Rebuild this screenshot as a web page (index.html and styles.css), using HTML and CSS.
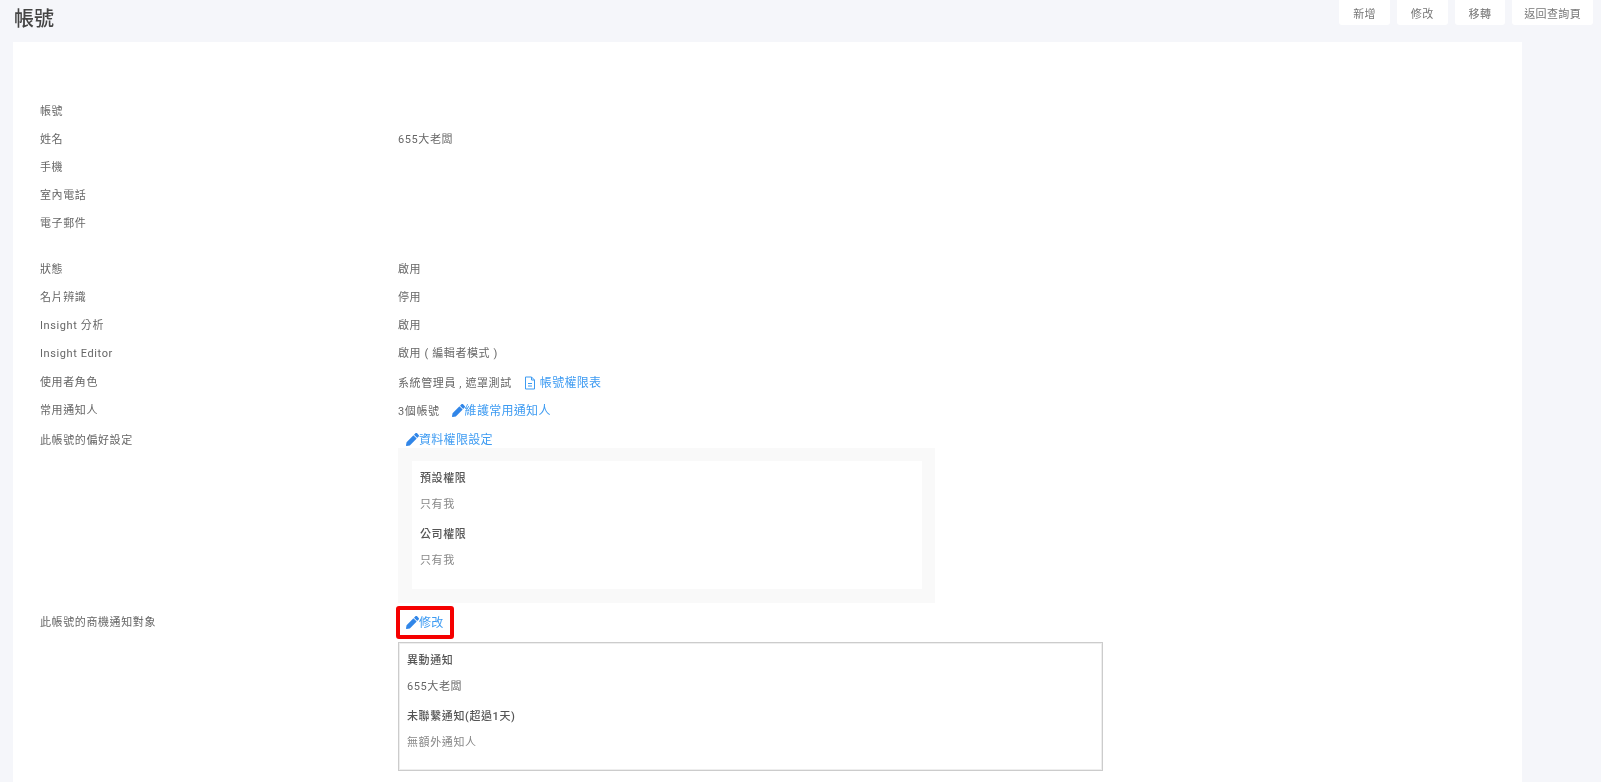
FILE: index.html
```html
<!DOCTYPE html>
<html lang="zh-Hant">
<head>
<meta charset="utf-8">
<title>帳號</title>
<link rel="stylesheet" href="styles.css">
</head>
<body>
<svg class="defs" width="0" height="0" aria-hidden="true">
  <symbol id="pencil" viewBox="0 0 512 512"><path d="M498 142l-46 46c-5 5-12 5-17 0L324 77c-5-5-5-12 0-17l46-46c19-19 49-19 68 0l60 60c19 19 19 49 0 68zM284 100L22 362 0 484c-3 16 11 31 28 28l122-21 262-263c5-5 5-12 0-17L301 100c-5-5-12-5-17 0z"/></symbol>
</svg>
<header class="top">
  <h1 class="title">帳號</h1>
  <nav class="actions">
    <a class="btn">新增</a>
    <a class="btn">修改</a>
    <a class="btn">移轉</a>
    <a class="btn long">返回查詢頁</a>
  </nav>
</header>
<main class="card">
  <section class="group">
    <div class="row"><span class="label">帳號</span><span class="value"></span></div>
    <div class="row"><span class="label">姓名</span><span class="value">655大老闆</span></div>
    <div class="row"><span class="label">手機</span><span class="value"></span></div>
    <div class="row"><span class="label">室內電話</span><span class="value"></span></div>
    <div class="row"><span class="label">電子郵件</span><span class="value"></span></div>
  </section>
  <section class="group second">
    <div class="row"><span class="label">狀態</span><span class="value">啟用</span></div>
    <div class="row"><span class="label">名片辨識</span><span class="value">停用</span></div>
    <div class="row"><span class="label">Insight 分析</span><span class="value">啟用</span></div>
    <div class="row"><span class="label">Insight Editor</span><span class="value">啟用 ( 編輯者模式 )</span></div>
    <div class="row"><span class="label">使用者角色</span><span class="value">系統管理員 , 遮罩測試<a class="link file-link"><svg class="file" viewBox="0 0 12 14"><path d="M1.5 1h6l3 3v9h-9zM7.5 1v3h3M4 7.5h4M4 10h4"/></svg>帳號權限表</a></span></div>
    <div class="row"><span class="label">常用通知人</span><span class="value">3個帳號<a class="link maintain"><svg class="pen"><use href="#pencil"/></svg>維護常用通知人</a></span></div>
    <div class="row block pref">
      <span class="label">此帳號的偏好設定</span>
      <div class="value">
        <a class="link indent"><svg class="pen"><use href="#pencil"/></svg>資料權限設定</a>
        <div class="shade">
          <div class="inner">
            <p class="head">預設權限</p>
            <p class="text">只有我</p>
            <p class="head">公司權限</p>
            <p class="text">只有我</p>
          </div>
        </div>
      </div>
    </div>
    <div class="row block notify">
      <span class="label">此帳號的商機通知對象</span>
      <div class="value">
        <span class="mark"><a class="link"><svg class="pen"><use href="#pencil"/></svg>修改</a></span>
        <div class="outline">
          <p class="head">異動通知</p>
          <p class="text dark">655大老闆</p>
          <p class="head">未聯繫通知(超過1天)</p>
          <p class="text">無額外通知人</p>
        </div>
      </div>
    </div>
  </section>
</main>
</body>
</html>
```
FILE: styles.css
```css
* { box-sizing: border-box; }
html, body { margin: 0; height: 782px; overflow: hidden; }
html { background: #f5f6fa; }
body {
  background: #f5f6fa;
  color: #666;
  font-family: Roboto, "Noto Sans CJK TC", sans-serif;
  font-size: 11px;
  letter-spacing: .6px;
  display: flex;
  flex-direction: column;
  filter: blur(.35px);
}
.defs { position: absolute; }
p { margin: 0; }
.top {
  height: 42px;
  flex: none;
  display: flex;
  justify-content: space-between;
  padding: 0 8px 0 14px;
}
.title {
  margin: 8px 0 0;
  font-size: 20px;
  line-height: 22px;
  font-weight: 500;
  letter-spacing: 0;
  color: #444;
}
.actions { display: flex; gap: 7px; height: 25px; }
.btn {
  display: flex;
  align-items: center;
  padding: 0 14px;
  background: #fff;
  border-radius: 0 0 3px 3px;
  color: #777;
  letter-spacing: .35px;
}
.btn.long { padding: 0 12px; }
.card {
  flex: 1;
  width: 1509px;
  margin-left: 13px;
  padding: 56px 0 0 27px;
  background: #fff;
}
.group.second { margin-top: 18px; }
.row {
  display: grid;
  grid-template-columns: 358px 1fr;
  height: 28px;
  line-height: 28px;
}
.second .row:nth-child(4) { height: 29px; }
.file-link { margin-left: 12px; }
.maintain { margin-left: 12px; }
.link {
  color: #3d9bf2;
  font-size: 12px;
  letter-spacing: .3px;
  white-space: nowrap;
}
.file {
  width: 12px;
  height: 14px;
  margin-right: 4px;
  vertical-align: -3px;
  fill: none;
  stroke: #3d9bf2;
  stroke-width: 1;
}
.pen {
  width: 13px;
  height: 13px;
  vertical-align: -2px;
  fill: #3186e8;
}
.row.block { height: auto; line-height: 16px; }
.pref { margin-top: 7px; }
.pref .label { line-height: 18px; }
.indent { display: block; padding-left: 8px; }
.shade {
  width: 537px;
  height: 155px;
  padding: 13px 13px 13px 14px;
  background: #f9f9f9;
}
.inner {
  height: 128px;
  padding: 9px 8px;
  background: #fff;
}
.head { color: #555; line-height: 18px; font-weight: 500; }
.text { color: #888; line-height: 18px; margin: 8px 0 12px; }
.text.dark { color: #666; }
.notify { margin-top: 3px; }
.notify .label { line-height: 33px; }
.mark {
  display: flex;
  width: 58px;
  height: 33px;
  margin-left: -2px;
  padding-left: 6px;
  align-items: center;
  border: 4px solid #f50000;
  border-radius: 3px;
}
.outline {
  width: 705px;
  height: 129px;
  margin-top: 3px;
  padding: 9px 8px;
  border: 1px solid #ccc;
  box-shadow: inset 0 0 0 1px #eee;
}
```
